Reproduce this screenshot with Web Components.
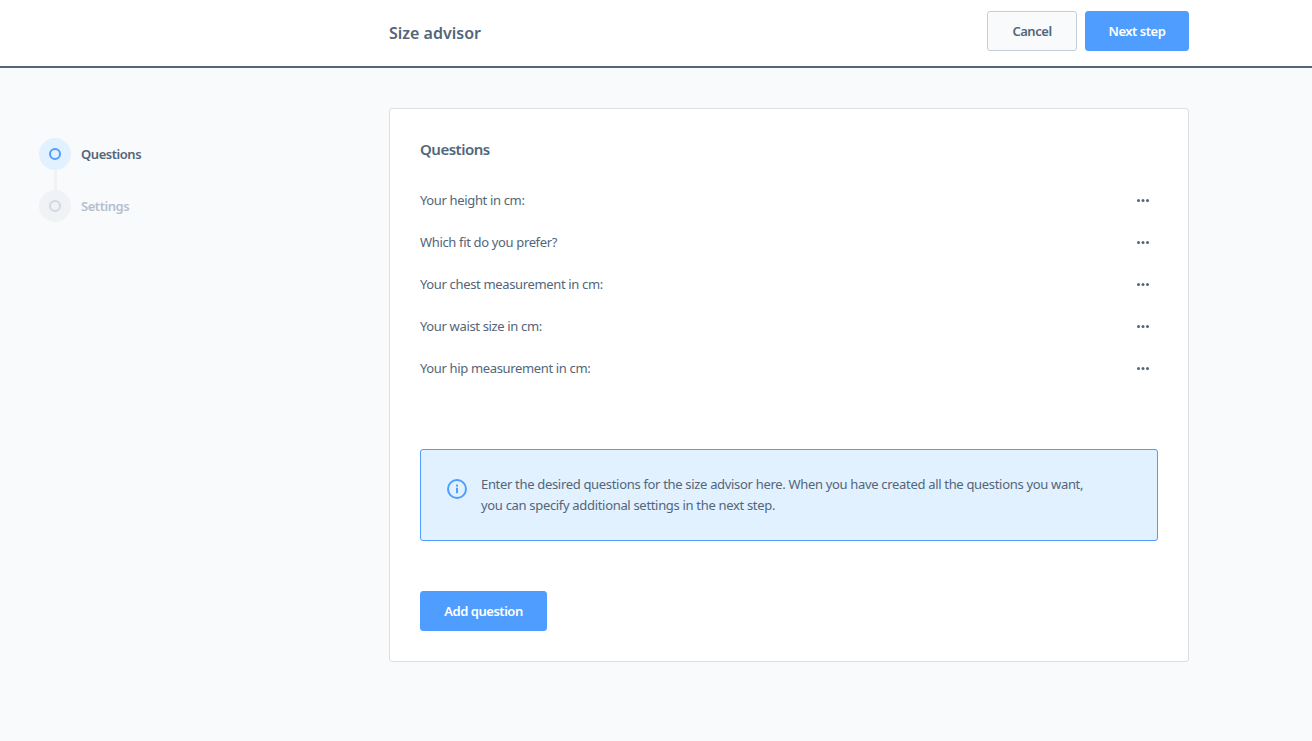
<!DOCTYPE html>
<html lang="en">
<head>
<meta charset="utf-8">
<title>Size advisor</title>
<style>
  html, body { margin: 0; height: 100%; }
  body {
    background: #f9fafc;
    color: #52667a;
    font: 14px "Noto Sans", "Liberation Sans", sans-serif;
  }
</style>
</head>
<body>
<template id="tpl-button">
  <style>
    :host { display: inline-flex; }
    button {
      height: 40px;
      padding: 0;
      width: var(--w, 127px);
      box-sizing: border-box;
      border-radius: 3px;
      border: 1px solid #4f9eff;
      background: #4f9eff;
      color: #fff;
      font: 600 13px "Noto Sans", sans-serif;
      letter-spacing: -0.47px;
    }
    :host([secondary]) button {
      background: #f9fafc;
      border-color: #c5ced8;
      color: #52667a;
    }
  </style>
  <button><slot></slot></button>
</template>

<template id="tpl-header">
  <style>
    :host {
      display: flex;
      align-items: center;
      justify-content: space-between;
      height: 66px;
      padding: 0 123px 0 389px;
      background: #fff;
      border-bottom: 2px solid #52667a;
    }
    h1 { margin: -1px 0 0; font: 600 16px "Noto Sans", sans-serif; letter-spacing: 0; color: #52667a; }
    .actions { display: flex; gap: 8px; margin-top: -4px; }
  </style>
  <h1><slot name="title"></slot></h1>
  <div class="actions"><slot></slot></div>
</template>

<template id="tpl-step">
  <style>
    :host {
      display: flex;
      align-items: center;
      gap: 10px;
      position: relative;
      font: 600 13px "Noto Sans", sans-serif;
      letter-spacing: -0.45px;
      color: #52667a;
    }
    .dot {
      width: 32px;
      height: 32px;
      border-radius: 50%;
      background: #e2f1ff;
      display: flex;
      align-items: center;
      justify-content: center;
    }
    .dot i {
      width: 12px;
      height: 12px;
      box-sizing: border-box;
      border: 2px solid #4f9eff;
      border-radius: 50%;
    }
    :host([muted]) { color: #b4c0cd; }
    :host([muted]) .dot { background: #f0f2f5; }
    :host([muted]) .dot i { border-color: #d1d9e0; }
    :host([line]) .dot::after {
      content: "";
      position: absolute;
      left: 15px;
      top: 32px;
      width: 3px;
      height: 20px;
      background: #f0f2f5;
    }
  </style>
  <div class="dot"><i></i></div>
  <span><slot></slot></span>
</template>

<template id="tpl-question">
  <style>
    :host {
      display: flex;
      align-items: center;
      justify-content: space-between;
      height: 42px;
      font-size: 13px;
      letter-spacing: -0.35px;
      color: #52667a;
    }
    svg { display: block; margin-right: 9px; }
  </style>
  <span><slot></slot></span>
  <svg width="12" height="3" viewBox="0 0 12 3" fill="#52667a"><circle cx="1.5" cy="1.5" r="1.5"/><circle cx="6" cy="1.5" r="1.5"/><circle cx="10.5" cy="1.5" r="1.5"/></svg>
</template>

<template id="tpl-notice">
  <style>
    :host {
      display: flex;
      gap: 14px;
      box-sizing: border-box;
      height: 92px;
      padding: 24px 26px;
      background: #e2f1ff;
      border: 1px solid #4f9eff;
      border-radius: 3px;
      font-size: 13px;
      line-height: 21px;
      letter-spacing: -0.32px;
      color: #52667a;
    }
    svg { flex: none; margin-top: 5px; }
    p { margin: 0; width: 620px; }
  </style>
  <svg width="20" height="20" viewBox="0 0 20 20" fill="none">
    <circle cx="10" cy="10" r="9" stroke="#4f9eff" stroke-width="2"/>
    <rect x="9" y="8.8" width="2" height="5.4" fill="#4f9eff"/>
    <rect x="9" y="5.6" width="2" height="2" fill="#4f9eff"/>
  </svg>
  <p><slot></slot></p>
</template>

<template id="tpl-card">
  <style>
    :host {
      display: block;
      box-sizing: border-box;
      width: 800px;
      height: 554px;
      padding: 29px 30px 30px;
      background: #fff;
      border: 1px solid #d9dfe5;
      border-radius: 3px;
    }
    h2 { margin: 0 0 19px; font: 600 15px/22px "Noto Sans", sans-serif; letter-spacing: -0.5px; color: #52667a; }
    .list { height: 270px; }
    .foot { margin-top: 50px; }
  </style>
  <h2><slot name="title"></slot></h2>
  <div class="list"><slot name="questions"></slot></div>
  <slot name="notice"></slot>
  <div class="foot"><slot name="foot"></slot></div>
</template>

<template id="tpl-layout">
  <style>
    :host { display: flex; padding: 40px 123px 0 39px; }
    .side {
      width: 350px;
      padding-top: 30px;
      display: flex;
      flex-direction: column;
      gap: 20px;
    }
  </style>
  <div class="side"><slot name="side"></slot></div>
  <slot></slot>
</template>

<size-header>
  <span slot="title">Size advisor</span>
  <ui-button secondary style="--w:90px">Cancel</ui-button>
  <ui-button style="--w:104px">Next step</ui-button>
</size-header>
<size-layout>
  <wizard-step slot="side" line>Questions</wizard-step>
  <wizard-step slot="side" muted>Settings</wizard-step>
  <size-card>
    <span slot="title">Questions</span>
    <question-row slot="questions">Your height in cm:</question-row>
    <question-row slot="questions">Which fit do you prefer?</question-row>
    <question-row slot="questions">Your chest measurement in cm:</question-row>
    <question-row slot="questions">Your waist size in cm:</question-row>
    <question-row slot="questions">Your hip measurement in cm:</question-row>
    <info-notice slot="notice">Enter the desired questions for the size advisor here. When you have created all the questions you want, you can specify additional settings in the next step.</info-notice>
    <ui-button slot="foot">Add question</ui-button>
  </size-card>
</size-layout>

<script>
  // every element just stamps its template into an open shadow root
  const tags = {
    'ui-button': 'tpl-button',
    'size-header': 'tpl-header',
    'wizard-step': 'tpl-step',
    'question-row': 'tpl-question',
    'info-notice': 'tpl-notice',
    'size-card': 'tpl-card',
    'size-layout': 'tpl-layout',
  };
  Object.keys(tags).forEach((tag) => {
    customElements.define(tag, class extends HTMLElement {
      constructor() {
        super();
        this.shadow = this.attachShadow({ mode: 'open' });
        this.shadow.appendChild(document.getElementById(tags[tag]).content.cloneNode(true));
      }
    });
  });
</script>
</body>
</html>
